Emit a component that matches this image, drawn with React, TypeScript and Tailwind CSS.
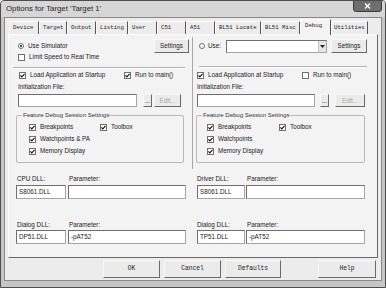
import React from 'react';

const sans = "font-['Liberation_Sans',Arial,sans-serif]";
const mono = "font-['Liberation_Mono','Courier_New',monospace]";

function Check({ on }: { on?: boolean }) {
  return (
    <span className="w-[7px] h-[7px] shrink-0 border border-[#707070] bg-white flex items-center justify-center">
      {on && (
        <svg width="5" height="5" viewBox="0 0 5 5">
          <path d="M0.4 2.4 L1.8 3.9 L4.6 0.8" stroke="#111" strokeWidth="1.1" fill="none" />
        </svg>
      )}
    </span>
  );
}

function Radio({ on }: { on?: boolean }) {
  return (
    <span className="w-[6px] h-[6px] shrink-0 rounded-full border border-[#707070] bg-white flex items-center justify-center">
      {on && <span className="w-[2px] h-[2px] rounded-full bg-[#111]" />}
    </span>
  );
}

function Btn({ label, w, disabled }: { label: string; w: string; disabled?: boolean }) {
  return (
    <div
      className={`${w} h-full flex items-center justify-center bg-[#ebebeb] border border-[#f8f8f8] border-r-[#6a6a6a] border-b-[#6a6a6a] text-[6.3px] ${
        disabled ? 'text-[#a8a8a8]' : 'text-[#222]'
      }`}
    >
      {label}
    </div>
  );
}

function Field({ w, value }: { w: string; value?: string }) {
  return (
    <div className={`${w} h-full bg-white border border-[#a5a5a5] border-t-[#6f6f6f] border-l-[#6f6f6f] flex items-center pl-[2px] text-[6.3px] text-[#222]`}>
      {value}
    </div>
  );
}

function CheckRow({ on, label, w }: { on?: boolean; label: string; w?: string }) {
  return (
    <div className={`flex items-center gap-[4px] ${w ?? ''}`}>
      <Check on={on} />
      <span>{label}</span>
    </div>
  );
}

function Group({ w, ml, second, pl, firstW }: { w: string; ml: string; second: string; pl: string; firstW: string }) {
  return (
    <div className={`relative mt-[8px] ${ml} ${w} h-[48px] border border-[#b9b9b9] rounded-[2px] ${pl} pt-[7px]`}>
      <span className="absolute -top-[4px] left-[5px] px-[1px] bg-[#f3f3f3] text-[6px] leading-[7px] text-[#333]">
        Feature Debug Session Settings
      </span>
      <div className="flex h-[8px] items-center">
        <CheckRow on label="Breakpoints" w={firstW} />
        <CheckRow on label="Toolbox" />
      </div>
      <div className="flex h-[8px] items-center mt-[4px]">
        <CheckRow on label={second} />
      </div>
      <div className="flex h-[8px] items-center mt-[4px]">
        <CheckRow on label="Memory Display" />
      </div>
    </div>
  );
}

function DllLabels({ label, cls, labelW }: { label: string; cls: string; labelW: string }) {
  return (
    <div className={`flex h-[8px] items-center ${cls}`}>
      <span className={labelW}>{label}</span>
      <span>Parameter:</span>
    </div>
  );
}

const tabs: [string, string][] = [
  ['Device', 'w-[30px]'],
  ['Target', 'w-[28px]'],
  ['Output', 'w-[29px]'],
  ['Listing', 'w-[32px]'],
  ['User', 'w-[29px]'],
  ['C51', 'w-[29px]'],
  ['A51', 'w-[29px]'],
  ['BL51 Locate', 'w-[46px]'],
  ['BL51 Misc', 'w-[39px]'],
];

export default function App() {
  return (
    <div className={`w-[386px] h-[288px] bg-[#c6c6c6] border border-[#4d4d4d] rounded-t-[4px] flex flex-col ${sans} text-[#222] overflow-hidden`}>
      {/* title bar */}
      <div className="h-[16px] shrink-0 flex bg-[#d6d6d6]">
        <span className="pl-[5px] pt-[3px] text-[7.8px] leading-[9px] text-[#1e1e1e]">Options for Target 'Target 1'</span>
        <div className="ml-auto mr-[3px] w-[29px] h-[12px] -mt-px bg-[#6e6e6e] border border-[#3c3c3c] rounded-b-[3px] flex items-center justify-center">
          <svg width="7" height="6" viewBox="0 0 7 6">
            <path d="M1 0.5 L6 5.5 M6 0.5 L1 5.5" stroke="#fff" strokeWidth="1.4" />
          </svg>
        </div>
      </div>

      {/* dialog body */}
      <div className="mx-[3px] h-[264px] shrink-0 bg-[#ececec] border border-[#8a8a8a] flex flex-col">
        {/* tabs */}
        <div className={`h-[16px] flex items-end pl-[4px] ${mono} text-[5.7px]`}>
          {tabs.map(([t, w]) => (
            <div key={t} className={`${w} h-[13px] flex items-center pl-[3px] border-t border-l border-r border-t-[#fbfbfb] border-l-[#fbfbfb] border-r-[#555] bg-[#ececec] whitespace-pre overflow-hidden`}>
              {t}
            </div>
          ))}
          <div className="w-[31px] h-[16px] -mb-px relative z-10 flex items-center pl-[4px] pb-[2px] border-t border-l border-r border-t-[#fbfbfb] border-l-[#fbfbfb] border-r-[#555] bg-[#f3f3f3]">
            Debug
          </div>
          <div className="w-[37px] h-[13px] flex items-center pl-[2px] border-t border-l border-r border-t-[#fbfbfb] border-l-[#fbfbfb] border-r-[#555] bg-[#ececec] overflow-hidden">
            Utilities
          </div>
        </div>

        {/* panel */}
        <div className="ml-[3px] w-[370px] h-[224px] bg-[#f3f3f3] border border-[#fbfbfb] border-r-[#6a6a6a] border-b-[#6a6a6a] flex text-[6.3px]">
          {/* left column */}
          <div className="w-[183px] flex flex-col">
            <div className="mt-[4px] h-[14px] flex items-center pl-[9px]">
              <Radio on />
              <span className="ml-[4px]">Use Simulator</span>
              <div className="ml-auto mr-[3px] h-full">
                <Btn label="Settings" w="w-[35px]" />
              </div>
            </div>
            <div className="h-[8px] flex items-center pl-[9px]">
              <CheckRow label="Limit Speed to Real Time" />
            </div>
            <div className="mt-[6px] ml-[4px] mr-[7px] h-[2px] border-t border-[#b2b2b2] border-b border-b-white" />
            <div className="mt-[2px] h-[8px] flex items-center pl-[10px]">
              <CheckRow on label="Load Application at Startup" w="w-[105px]" />
              <CheckRow on label="Run to main()" />
            </div>
            <div className="mt-[4px] h-[8px] flex items-center pl-[9px]">Initialization File:</div>
            <div className="mt-[3px] h-[13px] flex pl-[9px]">
              <Field w="w-[119px]" />
              <div className="ml-[6px] h-full"><Btn label="..." w="w-[9px]" /></div>
              <div className="ml-[2px] h-full"><Btn label="Edit..." w="w-[27px]" disabled /></div>
            </div>
            <Group w="w-[168px]" ml="ml-[7px]" second="Watchpoints & PA" pl="pl-[12px]" firstW="w-[71px]" />
            <DllLabels label="CPU DLL:" cls="pl-[8px] mt-[12px]" labelW="w-[52px]" />
            <div className="mt-[2px] h-[14px] flex pl-[7px]">
              <Field w="w-[50px]" value="S8061.DLL" />
              <div className="ml-[2px] h-full"><Field w="w-[118px]" /></div>
            </div>
            <DllLabels label="Dialog DLL:" cls="pl-[8px] mt-[22px]" labelW="w-[52px]" />
            <div className="mt-[1px] h-[14px] flex pl-[7px]">
              <Field w="w-[50px]" value="DP51.DLL" />
              <div className="ml-[2px] h-full"><Field w="w-[118px]" value="-pAT52" /></div>
            </div>
          </div>

          {/* divider */}
          <div className="w-px mt-[2px] h-[132px] bg-[#a9a9a9]" />

          {/* right column */}
          <div className="flex-1 flex flex-col">
            <div className="mt-[4px] h-[14px] flex items-center pl-[6px]">
              <Radio />
              <span className="ml-[3px]">Use:</span>
              <div className="ml-[5px] w-[101px] h-[13px] mt-px bg-white border border-[#a5a5a5] border-t-[#6f6f6f] border-l-[#6f6f6f] flex justify-end">
                <div className="w-[8px] h-full bg-[#e6e6e6] border-l border-[#c4c4c4] flex items-center justify-center">
                  <svg width="5" height="3" viewBox="0 0 5 3">
                    <path d="M0 0 L5 0 L2.5 3 Z" fill="#222" />
                  </svg>
                </div>
              </div>
              <div className="ml-[4px] h-full">
                <Btn label="Settings" w="w-[36px]" />
              </div>
            </div>
            <div className="h-[8px]" />
            <div className="mt-[5px] ml-[6px] mr-[10px] h-[2px] border-t border-[#b2b2b2] border-b border-b-white" />
            <div className="mt-[3px] h-[8px] flex items-center pl-[4px]">
              <CheckRow on label="Load Application at Startup" w="w-[105px]" />
              <CheckRow label="Run to main()" />
            </div>
            <div className="mt-[4px] h-[8px] flex items-center pl-[4px]">Initialization File:</div>
            <div className="mt-[3px] h-[13px] flex pl-[4px]">
              <Field w="w-[118px]" />
              <div className="ml-[5px] h-full"><Btn label="..." w="w-[9px]" /></div>
              <div className="ml-[6px] h-full"><Btn label="Edit..." w="w-[30px]" disabled /></div>
            </div>
            <Group w="w-[169px]" ml="ml-[3px]" second="Watchpoints" pl="pl-[10px]" firstW="w-[72px]" />
            <DllLabels label="Driver DLL:" cls="pl-[4px] mt-[12px]" labelW="w-[50px]" />
            <div className="mt-[2px] h-[14px] flex pl-[4px]">
              <Field w="w-[48px]" value="S8061.DLL" />
              <div className="ml-[1px] h-full"><Field w="w-[119px]" /></div>
            </div>
            <DllLabels label="Dialog DLL:" cls="pl-[4px] mt-[22px]" labelW="w-[50px]" />
            <div className="mt-[1px] h-[14px] flex pl-[4px]">
              <Field w="w-[48px]" value="TP51.DLL" />
              <div className="ml-[1px] h-full"><Field w="w-[119px]" value="-pAT52" /></div>
            </div>
          </div>
        </div>

        {/* bottom buttons */}
        <div className={`mt-[2px] h-[18px] flex ${mono}`}>
          <div className="ml-[98px] h-full"><Btn label="OK" w="w-[57px]" /></div>
          <div className="ml-[4px] h-full"><Btn label="Cancel" w="w-[57px]" /></div>
          <div className="ml-[4px] h-full"><Btn label="Defaults" w="w-[56px]" /></div>
          <div className="ml-[37px] h-full"><Btn label="Help" w="w-[58px]" /></div>
        </div>
      </div>
    </div>
  );
}
